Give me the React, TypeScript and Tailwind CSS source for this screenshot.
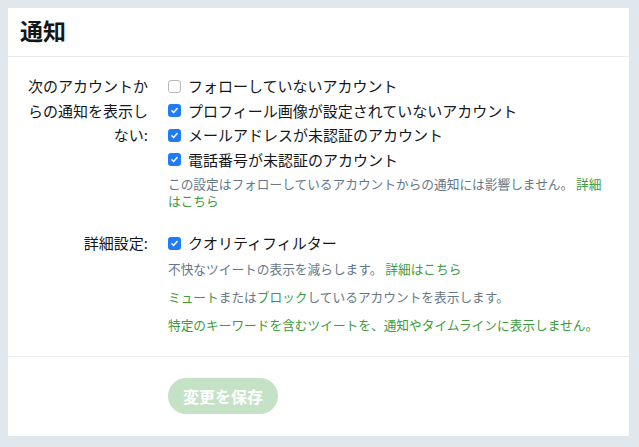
import React from "react";

const font = "font-['Noto_Sans_CJK_JP','Noto_Sans',sans-serif]";

const Box: React.FC<{ checked?: boolean }> = ({ checked }) =>
    checked ? (
        <span className="flex h-[13px] w-[13px] shrink-0 items-center justify-center rounded-[3px] bg-[#1f7cf4]">
            <svg viewBox="0 0 12 12" className="h-[9px] w-[9px]" fill="none" stroke="white" strokeWidth="2" strokeLinecap="round" strokeLinejoin="round">
                <path d="M2.5 6.3l2.3 2.4 4.7-5.4" />
            </svg>
        </span>
    ) : (
        <span className="h-[13px] w-[13px] shrink-0 rounded-[3px] border border-[#b8b8b8] bg-white" />
    );

const Option: React.FC<{ checked?: boolean; label: string }> = ({ checked, label }) => (
    <div className="flex h-[24.5px] items-center gap-[7px]">
        <Box checked={checked} />
        <span className="text-[15px] text-[#14171a]">{label}</span>
    </div>
);

const Link: React.FC<{ children: React.ReactNode }> = ({ children }) => (
    <span className="text-[#3d9a3d]">{children}</span>
);

export default function App() {
    const accountOptions = [
        { label: 'フォローしていないアカウント', checked: false },
        { label: 'プロフィール画像が設定されていないアカウント', checked: true },
        { label: 'メールアドレスが未認証のアカウント', checked: true },
        { label: '電話番号が未認証のアカウント', checked: true },
    ];

    return (
        <div className={`min-h-[447px] w-[639px] bg-[#e1e8ed] p-2 ${font}`}>
            <div className="flex h-[428px] w-[621px] flex-col bg-white">
                <div className="flex h-[49px] items-center border-b border-[#e6ecf0] px-3 pb-[3px]">
                    <h1 className="text-[23px] font-bold text-[#14171a]">通知</h1>
                </div>

                <div className="flex flex-col gap-[22px] pt-[17px] pb-[23px]">
                    <div className="flex">
                        <div className="w-[141px] pl-[19px] pr-[1px] text-right text-[15px] leading-[24.5px] text-[#14171a]">
                            次のアカウントからの通知を表示しない:
                        </div>
                        <div className="ml-[19px] flex-1 pr-5">
                            {accountOptions.map(o => (
                                <Option key={o.label} label={o.label} checked={o.checked} />
                            ))}
                            <p className="mt-[3px] text-[12.7px] leading-[17px] text-[#657786]">
                                この設定はフォローしているアカウントからの通知には影響しません。 <Link>詳細はこちら</Link>
                            </p>
                        </div>
                    </div>

                    <div className="flex">
                        <div className="w-[141px] pr-[1px] text-right text-[15px] leading-[24.5px] text-[#14171a]">
                            詳細設定:
                        </div>
                        <div className="ml-[19px] flex-1 pr-5">
                            <Option label="クオリティフィルター" checked />
                            <p className="mt-[4px] text-[12.7px] leading-[17px] text-[#657786]">
                                不快なツイートの表示を減らします。 <Link>詳細はこちら</Link>
                            </p>
                            <p className="mt-[11px] text-[12.7px] leading-[17px] text-[#657786]">
                                <Link>ミュート</Link>または<Link>ブロック</Link>しているアカウントを表示します。
                            </p>
                            <p className="mt-[11px] text-[12.7px] leading-[17px] text-[#3d9a3d]">
                                特定のキーワードを含むツイートを、通知やタイムラインに表示しません。
                            </p>
                        </div>
                    </div>
                </div>

                <div className="border-t border-[#e6ecf0] pt-[21px] pl-[160px]">
                    <button className="h-[36px] w-[110px] rounded-full bg-[#c6e2c6] text-[16px] font-bold text-white">
                        変更を保存
                    </button>
                </div>
            </div>
        </div>
    );
}
